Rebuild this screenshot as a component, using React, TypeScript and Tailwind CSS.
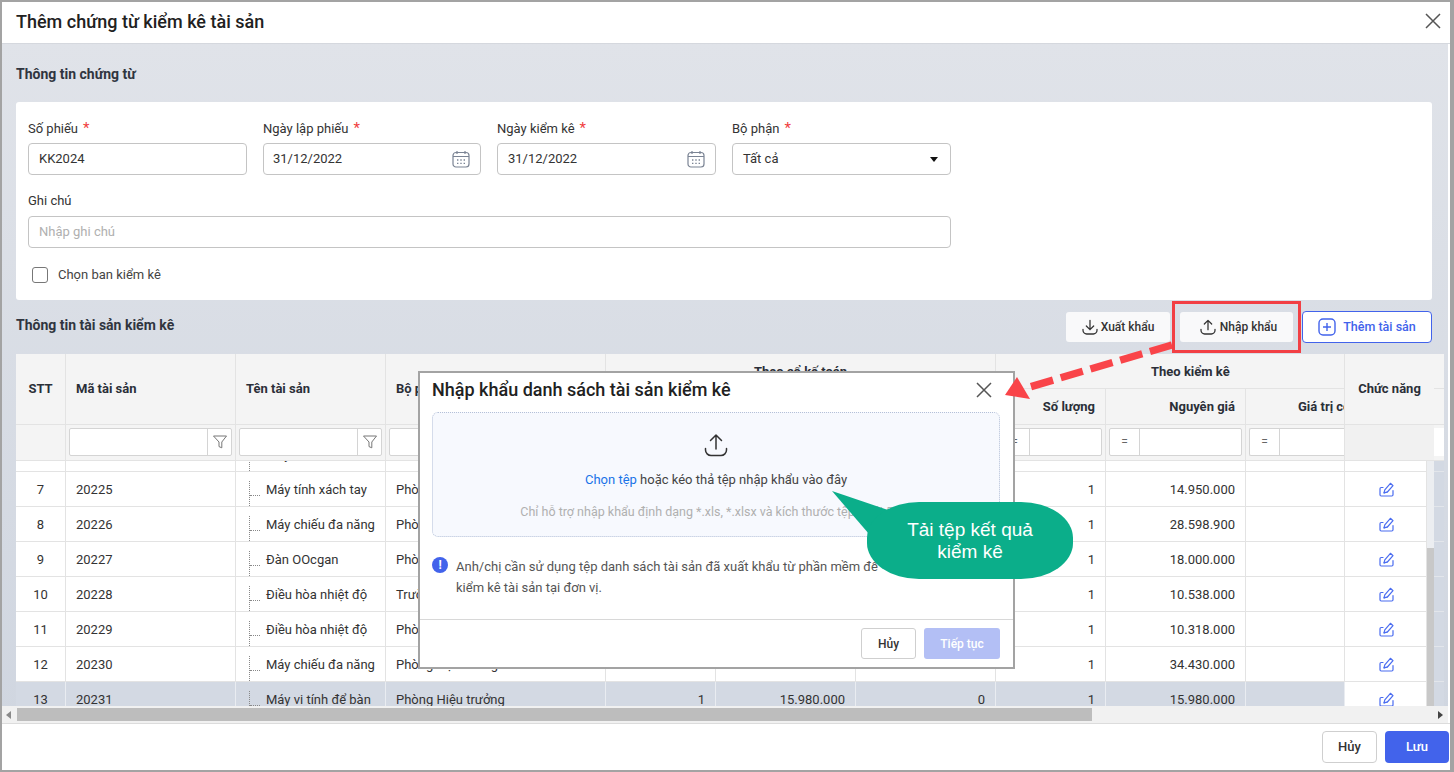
import React from 'react';

interface AssetRow {
  stt: number;
  code: string;
  name: string;
  dept: string;
  qty?: string;
  cost?: string;
  remain?: string;
  checkCost: string;
  selected?: boolean;
  hideAction?: boolean;
}

const rows: AssetRow[] = [
  { stt: 6, code: '20224', name: 'Máy in màu', dept: 'Phòng Kế toán', checkCost: '12.400.000', hideAction: true },
  { stt: 7, code: '20225', name: 'Máy tính xách tay', dept: 'Phòng Kế toán', checkCost: '14.950.000' },
  { stt: 8, code: '20226', name: 'Máy chiếu đa năng', dept: 'Phòng Học', checkCost: '28.598.900' },
  { stt: 9, code: '20227', name: 'Đàn OOcgan', dept: 'Phòng Nhạc', checkCost: '18.000.000' },
  { stt: 10, code: '20228', name: 'Điều hòa nhiệt độ', dept: 'Trường', checkCost: '10.538.000' },
  { stt: 11, code: '20229', name: 'Điều hòa nhiệt độ', dept: 'Phòng Học', checkCost: '10.318.000' },
  { stt: 12, code: '20230', name: 'Máy chiếu đa năng', dept: 'Phòng Hội trường', checkCost: '34.430.000' },
  { stt: 13, code: '20231', name: 'Máy vi tính để bàn', dept: 'Phòng Hiệu trưởng', qty: '1', cost: '15.980.000', remain: '0', checkCost: '15.980.000', selected: true },
];

const CalendarIcon = () => (
  <svg width="18" height="18" viewBox="0 0 18 18" fill="none" stroke="#7b8494" strokeWidth="1.2">
    <rect x="1" y="2.5" width="16" height="14.5" rx="3" />
    <path d="M1 6.5h16M5 1v3M13 1v3" />
    <path d="M5 10h1.4M8.3 10h1.4M11.6 10h1.4M5 13.4h1.4M8.3 13.4h1.4M11.6 13.4h1.4" strokeWidth="1.3" />
  </svg>
);

const FilterIcon = () => (
  <svg width="16" height="16" viewBox="0 0 16 16" fill="none" stroke="#777" strokeWidth="1">
    <path d="M1.5 2h13L9.8 8v5.8L7 12.6V8Z" strokeLinejoin="round" />
  </svg>
);

const EditIcon = () => (
  <svg width="15" height="15" viewBox="0 0 15 15" fill="none" stroke="#4a6cf0" strokeWidth="1.2" strokeLinejoin="round" strokeLinecap="round">
    <path d="M4 5.5H2.2A1.2 1.2 0 0 0 1 6.7v6.1A1.2 1.2 0 0 0 2.2 14h10.6a1.2 1.2 0 0 0 1.2-1.2V8.5" />
    <path d="M5 10.8l.8-3L11.4 1.3l2.6 2.4-5.6 6.3Z" />
    <path d="M5 10.8l3.4-.8" />
  </svg>
);

const UploadIcon = ({ size = 16, color = '#333', sw = 1.3 }: { size?: number; color?: string; sw?: number }) => (
  <svg width={size} height={size} viewBox="0 0 24 24" fill="none" stroke={color} strokeWidth={sw} strokeLinecap="round" strokeLinejoin="round">
    <path d="M12 16V2M6.5 7.5 12 2l5.5 5.5" />
    <path d="M1.5 15.5v1.5c0 3 2.5 5.5 5.5 5.5h10c3 0 5.5-2.5 5.5-5.5v-1.5" />
  </svg>
);

const DownloadIcon = () => (
  <svg width="16" height="16" viewBox="0 0 24 24" fill="none" stroke="#333" strokeWidth="1.9" strokeLinecap="round" strokeLinejoin="round">
    <path d="M12 2v14M6.5 10.5 12 16l5.5-5.5" />
    <path d="M1.5 15.5v1.5c0 3 2.5 5.5 5.5 5.5h10c3 0 5.5-2.5 5.5-5.5v-1.5" />
  </svg>
);

const CloseIcon = ({ size }: { size: number }) => (
  <svg width={size} height={size} viewBox="0 0 16 16" fill="none" stroke="#555" strokeWidth="1.5">
    <path d="M1 1l14 14M15 1 1 15" />
  </svg>
);

const Label = ({ text, required }: { text: string; required?: boolean }) => (
  <div className="h-[20px] text-[13px] leading-[20px] text-[#333]">
    {text}
    {required && <span className="ml-[5px] text-[15px] text-[#f03e3e]">*</span>}
  </div>
);

const TextFilter = () => (
  <div className="mx-[3px] mt-[3px] flex h-[28px] rounded-[2px] border border-[#d4d4d4] bg-white">
    <div className="flex-1" />
    <div className="flex w-[24px] items-center justify-center border-l border-[#d4d4d4]">
      <FilterIcon />
    </div>
  </div>
);

const NumFilter = ({ open }: { open?: boolean }) => (
  <div className={`ml-[3px] mt-[3px] flex h-[28px] rounded-l-[2px] border border-[#d4d4d4] bg-white ${open ? 'mr-0 border-r-0' : 'mr-[3px] rounded-r-[2px]'}`}>
    <div className="flex w-[30px] items-center justify-center border-r border-[#d4d4d4] text-[12px] text-[#666]">=</div>
  </div>
);

const headCell = 'flex items-center overflow-hidden whitespace-nowrap border-r border-b border-[#e3e3e3] bg-[#f4f4f4] px-[10px] text-[13px] font-bold text-[#2b2f38]';
const filterCell = 'overflow-hidden border-r border-b border-[#e3e3e3] bg-[#f4f4f4]';

const TableHead = () => (
  <div className="grid shrink-0 grid-cols-[50px_170px_150px_220px_110px_140px_140px_110px_140px_99px_89px_10px] grid-rows-[35px_36px_36px]">
    <div className={`${headCell} col-start-1 row-span-2 row-start-1 justify-center`}>STT</div>
    <div className={`${headCell} col-start-2 row-span-2 row-start-1`}>Mã tài sản</div>
    <div className={`${headCell} col-start-3 row-span-2 row-start-1`}>Tên tài sản</div>
    <div className={`${headCell} col-start-4 row-span-2 row-start-1`}>Bộ phận</div>
    <div className={`${headCell} col-span-3 col-start-5 row-start-1 justify-center pt-[2px]`}>Theo sổ kế toán</div>
    <div className={`${headCell} col-span-3 col-start-8 row-start-1 pl-[155px] pt-[2px]`}>Theo kiểm kê</div>
    <div className={`${headCell} col-start-5 row-start-2 justify-end`}>Số lượng</div>
    <div className={`${headCell} col-start-6 row-start-2 justify-end`}>Nguyên giá</div>
    <div className={`${headCell} col-start-7 row-start-2 justify-end`}>Giá trị còn lại</div>
    <div className={`${headCell} col-start-8 row-start-2 justify-end`}>Số lượng</div>
    <div className={`${headCell} col-start-9 row-start-2 justify-end`}>Nguyên giá</div>
    <div className={`${headCell} col-start-10 row-start-2 pl-[52px]`}>Giá trị còn lại</div>
    <div className={`${headCell} col-start-11 row-span-2 row-start-1 justify-center border-r-0 px-0`}>Chức năng</div>
    <div className={`${headCell} col-start-12 row-start-1 border-r-0`} />
    <div className={`${headCell} col-start-12 row-start-2 border-r-0 px-0`}>Số lượng</div>

    <div className={filterCell} />
    <div className={filterCell}><TextFilter /></div>
    <div className={filterCell}><TextFilter /></div>
    <div className={filterCell}><TextFilter /></div>
    <div className={filterCell}><NumFilter /></div>
    <div className={filterCell}><NumFilter /></div>
    <div className={filterCell}><NumFilter /></div>
    <div className={filterCell}><NumFilter /></div>
    <div className={filterCell}><NumFilter /></div>
    <div className={filterCell}><NumFilter open /></div>
    <div className="border-b border-[#e3e3e3] bg-[#f1f1f1]" />
    <div className="border-b border-[#e3e3e3] bg-[#f4f4f4] pt-[3px]">
      <div className="h-[28px] bg-white" />
    </div>
  </div>
);

const TableRow = ({ row }: { row: AssetRow }) => {
  const bg = row.selected ? 'bg-[#d3d9e3] border-[#e9ecf1]' : 'bg-white border-[#e3e3e3]';
  const cell = `flex items-center overflow-hidden whitespace-nowrap border-r border-b px-[10px] pt-[2px] text-[13px] text-[#333] ${bg}`;
  return (
    <div className="grid h-[35px] grid-cols-[50px_170px_150px_220px_110px_140px_140px_110px_140px_99px_82px_17px]">
      <div className={`${cell} justify-center`}>{row.stt}</div>
      <div className={cell}>{row.code}</div>
      <div className={`${cell} pl-[13px]`}>
        <span className="mr-[6px] h-[25px] w-[11px] shrink-0 self-end border-l border-dotted border-[#888]">
          <span className="block h-[15px] border-b border-dotted border-[#888]" />
        </span>
        {row.name}
      </div>
      <div className={cell}>{row.dept}</div>
      <div className={`${cell} justify-end`}>{row.qty}</div>
      <div className={`${cell} justify-end`}>{row.cost}</div>
      <div className={`${cell} justify-end`}>{row.remain}</div>
      <div className={`${cell} justify-end text-[#3d6591]`}>1</div>
      <div className={`${cell} justify-end`}>{row.checkCost}</div>
      <div className={cell} />
      <div className="flex items-center justify-center border-r border-b border-[#e3e3e3] bg-white pl-[2px]">
        {!row.hideAction && <EditIcon />}
      </div>
      <div className="border-b border-[#e3e6eb] bg-[#d3d9e3]" />
    </div>
  );
};

const ImportModal = () => (
  <div className="absolute left-[416px] top-[369px] flex h-[298px] w-[597px] flex-col border-2 border-[#a3a3a3] bg-white">
    <div className="flex h-[39px] shrink-0 items-center justify-between pb-[5px] pl-[12px] pr-[21px]">
      <span className="pb-[2px] text-[18px] font-medium text-[#212121]">Nhập khẩu danh sách tài sản kiểm kê</span>
      <CloseIcon size={16} />
    </div>
    <div className="ml-[12px] flex h-[125px] w-[568px] shrink-0 flex-col items-center rounded-[6px] border border-dotted border-[#b4c0d8] bg-[#f7f9fe] pt-[20px]">
      <UploadIcon size={24} color="#333" sw={1.5} />
      <div className="mt-[13px] h-[20px] text-[13px] leading-[20px] text-[#444]">
        <span className="text-[#1a73e8]">Chọn tệp</span> hoặc kéo thả tệp nhập khẩu vào đây
      </div>
      <div className="mt-[12px] h-[20px] whitespace-nowrap text-[12.5px] leading-[20px] text-[#b0b0b0]">
        Chỉ hỗ trợ nhập khẩu định dạng *.xls, *.xlsx và kích thước tệp dưới 5MB
      </div>
    </div>
    <div className="ml-[12px] mt-[19px] flex flex-1 items-start gap-[8px]">
      <span className="mt-[1px] flex h-[16px] w-[16px] shrink-0 items-center justify-center rounded-full bg-[#4263eb] text-[12px] font-bold leading-none text-white">!</span>
      <div className="whitespace-nowrap text-[13px] leading-[21px] text-[#555]">
        Anh/chị cần sử dụng tệp danh sách tài sản đã xuất khẩu từ phần mềm để
        <br />
        kiểm kê tài sản tại đơn vị.
      </div>
    </div>
    <div className="flex h-[48px] shrink-0 items-center justify-end gap-[8px] border-t border-[#d8d8d8] pr-[13px]">
      <button className="flex h-[31px] w-[55px] items-center justify-center rounded-[3px] border border-[#cfcfcf] bg-white text-[12px] font-medium text-[#333]">Hủy</button>
      <button className="flex h-[31px] w-[76px] items-center justify-center rounded-[3px] bg-[#b3bff5] text-[12px] font-medium text-white">Tiếp tục</button>
    </div>
  </div>
);

export default function App() {
  return (
    <div className="relative flex h-[772px] w-[1454px] flex-col overflow-hidden border-y-2 border-l-2 border-r-4 border-[#a3a3a3] bg-white font-[Roboto,sans-serif]">
      <div className="flex h-[42px] shrink-0 items-center justify-between border-b border-[#d5d8de] pb-[3px] pl-[14px] pr-[9px]">
        <span className="text-[18px] font-medium text-[#212121]">Thêm chứng từ kiểm kê tài sản</span>
        <CloseIcon size={16} />
      </div>

      <div className="mr-[2px] flex min-h-0 flex-1 flex-col bg-linear-to-b from-[#e0e3e9] to-[#d0d6e0]">
        <div className="mb-[18px] ml-[14px] mt-[20px] h-[20px] shrink-0 text-[14px] font-bold leading-[20px] text-[#30353f]">Thông tin chứng từ</div>

        <div className="ml-[14px] mr-[16px] h-[198px] shrink-0 rounded-[3px] bg-white px-[12px] pt-[16px]">
          <div className="flex gap-[16px]">
            <div className="w-[219px]">
              <Label text="Số phiếu" required />
              <div className="mt-[5px] flex h-[32px] items-center rounded-[4px] border border-[#c4c4c4] px-[10px] text-[13px] text-[#333]">KK2024</div>
            </div>
            <div className="w-[218px]">
              <Label text="Ngày lập phiếu" required />
              <div className="mt-[5px] flex h-[32px] items-center justify-between rounded-[4px] border border-[#c4c4c4] pl-[9px] pr-[10px] text-[13px] text-[#333]">31/12/2022<CalendarIcon /></div>
            </div>
            <div className="w-[219px]">
              <Label text="Ngày kiểm kê" required />
              <div className="mt-[5px] flex h-[32px] items-center justify-between rounded-[4px] border border-[#c4c4c4] pl-[10px] pr-[10px] text-[13px] text-[#333]">31/12/2022<CalendarIcon /></div>
            </div>
            <div className="w-[219px]">
              <Label text="Bộ phận" required />
              <div className="mt-[5px] flex h-[32px] items-center justify-between rounded-[4px] border border-[#c4c4c4] pl-[10px] pr-[12px] text-[13px] text-[#333]">
                Tất cả
                <span className="h-0 w-0 border-x-[4.5px] border-t-[5px] border-x-transparent border-t-[#111]" />
              </div>
            </div>
          </div>
          <div className="mt-[16px] w-[923px]">
            <Label text="Ghi chú" />
            <div className="mt-[5px] flex h-[32px] items-center rounded-[4px] border border-[#c4c4c4] px-[10px] text-[13px] text-[#b0b0b0]">Nhập ghi chú</div>
          </div>
          <div className="ml-[4px] mt-[18px] flex items-center gap-[10px]">
            <span className="h-[16px] w-[16px] rounded-[3px] border border-[#777]" />
            <span className="pt-[1px] text-[13px] leading-[16px] text-[#444]">Chọn ban kiểm kê</span>
          </div>
        </div>

        <div className="my-[11px] ml-[14px] mr-[16px] flex h-[32px] shrink-0 items-center justify-between">
          <span className="pb-[4px] text-[14px] font-bold text-[#30353f]">Thông tin tài sản kiểm kê</span>
          <div className="flex items-center">
            <button className="flex h-[30px] w-[104px] items-center justify-center gap-[3px] rounded-[3px] bg-[#f9f9fa] text-[12px] font-medium text-[#333]">
              <DownloadIcon />Xuất khẩu
            </button>
            <button className="ml-[10px] flex h-[30px] w-[113px] items-center justify-center gap-[4px] rounded-[3px] bg-[#f9f9fa] pl-[4px] text-[12px] font-medium text-[#333]">
              <UploadIcon size={16} sw={1.9} />Nhập khẩu
            </button>
            <button className="ml-[9px] flex h-[32px] w-[130px] items-center justify-center gap-[7px] rounded-[4px] border border-[#4263eb] bg-white text-[12.5px] font-medium text-[#4263eb]">
              <svg width="18" height="18" viewBox="0 0 18 18" fill="none" stroke="#4263eb" strokeWidth="1.4">
                <rect x="1" y="1" width="16" height="16" rx="4" />
                <path d="M9 5v8M5 9h8" />
              </svg>
              Thêm tài sản
            </button>
          </div>
        </div>

        <div className="relative ml-[14px] mr-[4px] flex min-h-0 flex-1 flex-col overflow-hidden">
          <TableHead />
          <div className="min-h-0 flex-1 overflow-hidden">
            <div className="-mt-[24px]">
              {rows.map((row) => (
                <TableRow key={row.stt} row={row} />
              ))}
            </div>
          </div>
          <div className="absolute bottom-0 right-[10px] top-[107px] flex w-[7px] flex-col">
            <div className="h-[87px] bg-[#eceef1]" />
            <div className="flex-1 bg-[#c8c8c8]" />
          </div>
        </div>

        <div className="flex h-[17px] shrink-0 items-center bg-[#f1f1f1]">
          <span className="ml-[4px] h-0 w-0 border-y-[4px] border-r-[5px] border-y-transparent border-r-[#8a8a8a]" />
          <div className="ml-[6px] h-[13px] w-[1075px] bg-[#bdbdbd]" />
          <span className="ml-auto mr-[5px] h-0 w-0 border-y-[4px] border-l-[5px] border-y-transparent border-l-[#444]" />
        </div>
      </div>

      <div className="flex h-[47px] shrink-0 items-center justify-end gap-[8px] border-t border-[#dcdcdc] pr-[1px]">
        <button className="flex h-[32px] w-[55px] items-center justify-center rounded-[4px] border border-[#cfcfcf] bg-white text-[13px] font-medium text-[#333]">Hủy</button>
        <button className="flex h-[32px] w-[64px] items-center justify-center rounded-[4px] bg-[#4263eb] text-[13px] font-medium text-white">Lưu</button>
      </div>

      <ImportModal />

      <svg className="pointer-events-none absolute -left-[2px] -top-[2px]" width="1454" height="772" viewBox="0 0 1454 772">
        <polygon points="832,491 888,510 869,534" fill="#0bae8a" />
        <line x1="1172" y1="345" x2="1026" y2="388" stroke="#f94449" strokeWidth="7.5" strokeDasharray="23 8" />
        <polygon points="1005,395 1017,377 1030,399" fill="#f94449" />
      </svg>

      <div className="absolute left-[865px] top-[500px] flex h-[77px] w-[206px] flex-col items-center justify-center rounded-[52px/36px] bg-[#0bae8a] font-['Liberation_Sans',sans-serif] text-[19px] leading-[22px] text-white">
        <span>Tải tệp kết quả</span>
        <span>kiểm kê</span>
      </div>

      <div className="absolute left-[1170px] top-[299px] h-[52px] w-[129px] border-[3px] border-[#f23f44]" />
    </div>
  );
}
